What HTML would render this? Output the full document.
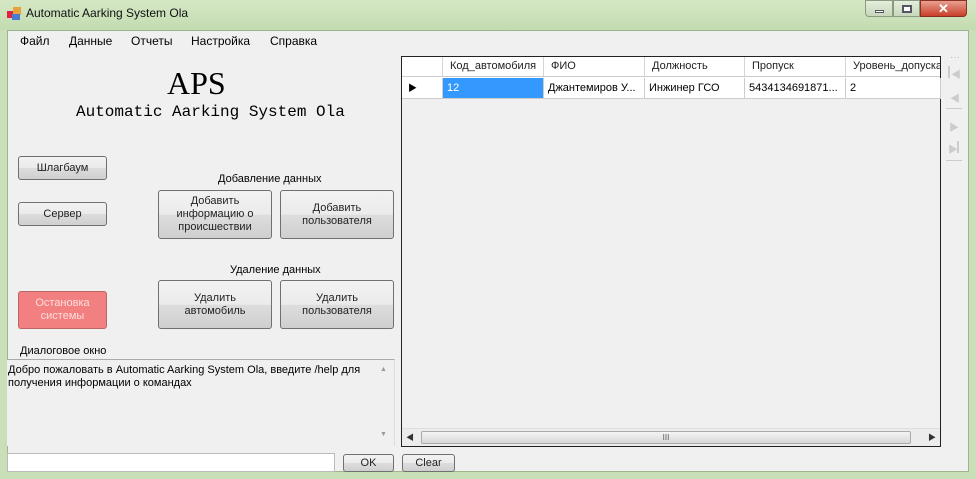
<!DOCTYPE html>
<html><head><meta charset="utf-8"><style>
*{box-sizing:border-box;margin:0;padding:0}
body{width:976px;height:479px;position:relative;overflow:hidden;background:#c9dfb8;font-family:"Liberation Sans","Noto Sans CJK SC",sans-serif;font-size:11px;color:#000}
.a{position:absolute}
.title{left:0;top:0;width:976px;height:30px;background:linear-gradient(#d5e8c6,#c3dbb0)}
.client{left:7px;top:30px;width:962px;height:442px;background:#f0f0f0;border:1px solid #9fb58e}
.btn{position:absolute;border:1px solid #707070;border-radius:3px;background:linear-gradient(#f2f2f2 0%,#ebebeb 50%,#dddddd 51%,#cfcfcf 100%);text-align:center;display:flex;align-items:center;justify-content:center;line-height:13px;font-size:11px;color:#222}
.hd{position:absolute;top:0;height:19px;line-height:19px;padding-left:7px;border-right:1px solid #d5d5d5;color:#222}
.cell{position:absolute;top:21px;height:21px;line-height:21px;padding-left:4px;border-right:1px solid #ccc;border-bottom:1px solid #ccc;white-space:nowrap;overflow:hidden}
.m{position:absolute;top:34px;font-size:12px}
</style></head><body>
<div class="a title"></div>
<div class="a" style="left:7px;top:7px;width:14px;height:13px"><div class="a" style="left:0;top:4px;width:7px;height:7px;background:#d24"></div><div class="a" style="left:6px;top:0;width:8px;height:8px;background:#e9a23a"></div><div class="a" style="left:5px;top:7px;width:8px;height:6px;background:#4a7bd0"></div></div>
<div class="a" style="left:26px;top:6px;font-size:12px;color:#111">Automatic Aarking System Ola</div>
<div class="a" style="left:865px;top:0;width:28px;height:17px;border:1px solid #8a9a80;border-radius:0 0 0 4px;background:linear-gradient(#e4eedc,#c8d8bc)"><div class="a" style="left:9px;top:9px;width:9px;height:3px;background:#fff;border:1px solid #556"></div></div>
<div class="a" style="left:893px;top:0;width:27px;height:17px;border:1px solid #8a9a80;background:linear-gradient(#e4eedc,#c8d8bc)"><div class="a" style="left:8px;top:4px;width:10px;height:8px;border:2px solid #556;background:#fff"></div></div>
<div class="a" style="left:920px;top:0;width:47px;height:17px;border:1px solid #8a3020;border-radius:0 0 4px 0;background:linear-gradient(#e8a090,#c8402a);color:#fff;font-weight:bold;text-align:center;line-height:16px;font-size:13px">✕</div>
<div class="a client"></div>
<div class="m" style="left:20px">Файл</div>
<div class="m" style="left:69px">Данные</div>
<div class="m" style="left:131px">Отчеты</div>
<div class="m" style="left:191px">Настройка</div>
<div class="m" style="left:270px">Справка</div>
<div class="a" style="left:167px;top:66px;font-family:'Liberation Serif',serif;font-size:32px;line-height:34px">APS</div>
<div class="a" style="left:76px;top:102px;font-family:'Liberation Mono',monospace;font-size:16px;line-height:20px">Automatic Aarking System Ola</div>
<div class="btn" style="left:18px;top:156px;width:89px;height:24px">Шлагбаум</div>
<div class="btn" style="left:18px;top:202px;width:89px;height:24px">Сервер</div>
<div class="btn" style="left:18px;top:291px;width:89px;height:38px;background:#f28080;color:#fdd;border-color:#b66">Остановка<br>системы</div>
<div class="a" style="left:218px;top:173px">Добавление данных</div>
<div class="a" style="left:230px;top:264px">Удаление данных</div>
<div class="btn" style="left:158px;top:190px;width:114px;height:49px">Добавить<br>информацию о<br>происшествии</div>
<div class="btn" style="left:280px;top:190px;width:114px;height:49px">Добавить<br>пользователя</div>
<div class="btn" style="left:158px;top:280px;width:114px;height:49px">Удалить<br>автомобиль</div>
<div class="btn" style="left:280px;top:280px;width:114px;height:49px">Удалить<br>пользователя</div>
<div class="a" style="left:20px;top:345px;font-size:11px">Диалоговое окно</div>
<div class="a" style="left:7px;top:359px;width:388px;height:87px;background:#f0f0f0;border-top:1px solid #aaa;border-right:1px solid #ddd"></div>
<div class="a" style="left:8px;top:364px;width:360px;line-height:13px">Добро пожаловать в Automatic Aarking System Ola, введите /help для получения информации о командах</div>
<div class="a" style="left:380px;top:366px;font-size:7px;color:#999">▲</div>
<div class="a" style="left:380px;top:431px;font-size:7px;color:#999">▼</div>
<div class="a" style="left:7px;top:453px;width:328px;height:19px;background:#fff;border:1px solid #bbb"></div>
<div class="btn" style="left:343px;top:454px;width:51px;height:18px">OK</div>
<div class="btn" style="left:402px;top:454px;width:53px;height:18px">Clear</div>
<div class="a" style="left:401px;top:56px;width:540px;height:391px;border:1px solid #222;background:#f0f0f0">
 <div class="a" style="left:0;top:0;width:538px;height:20px;background:#fff;border-bottom:1px solid #ccc;overflow:hidden">
  <div class="hd" style="left:0;width:41px"></div>
  <div class="hd" style="left:41px;width:101px">Код_автомобиля</div>
  <div class="hd" style="left:142px;width:101px">ФИО</div>
  <div class="hd" style="left:243px;width:100px">Должность</div>
  <div class="hd" style="left:343px;width:101px">Пропуск</div>
  <div class="hd" style="left:444px;width:110px">Уровень_допуска</div>
 </div>
 <div class="a" style="left:0;top:20px;width:538px;height:22px;background:#fff"></div>
 <div class="cell" style="left:0;width:41px;padding-left:6px;font-size:9px">▶</div>
 <div class="cell" style="left:41px;width:101px;background:#3399ff;color:#fff">12</div>
 <div class="cell" style="left:142px;width:101px">Джантемиров У...</div>
 <div class="cell" style="left:243px;width:100px">Инжинер ГСО</div>
 <div class="cell" style="left:343px;width:101px">5434134691871...</div>
 <div class="cell" style="left:444px;width:95px">2</div>
 <div class="a" style="left:0;top:371px;width:538px;height:18px;background:#ececec;border-top:1px solid #ddd">
  <div class="a" style="left:4px;top:3px;font-size:8px;color:#333">◀</div>
  <div class="a" style="left:19px;top:2px;width:490px;height:13px;border:1px solid #aaa;border-radius:2px;background:linear-gradient(#f4f4f4,#d8d8d8);text-align:center;font-size:8px;line-height:12px;color:#555">III</div>
  <div class="a" style="left:526px;top:3px;font-size:8px;color:#333">▶</div>
 </div>
</div>
<div class="a" style="left:950px;top:52px;color:#bbb;font-size:10px">···</div>
<div class="a" style="left:948px;top:66px;width:2px;height:12px;background:#ccc"></div><div class="a" style="left:951px;top:66px;font-size:10px;color:#ccc">◀</div>
<div class="a" style="left:950px;top:90px;font-size:10px;color:#ccc">◀</div>
<div class="a" style="left:946px;top:108px;width:16px;height:1px;background:#ccc"></div>
<div class="a" style="left:949px;top:119px;font-size:10px;color:#ccc">▶</div>
<div class="a" style="left:948px;top:141px;font-size:10px;color:#ccc">▶</div><div class="a" style="left:957px;top:141px;width:2px;height:12px;background:#ccc"></div>
<div class="a" style="left:946px;top:160px;width:16px;height:1px;background:#ccc"></div>
</body></html>
